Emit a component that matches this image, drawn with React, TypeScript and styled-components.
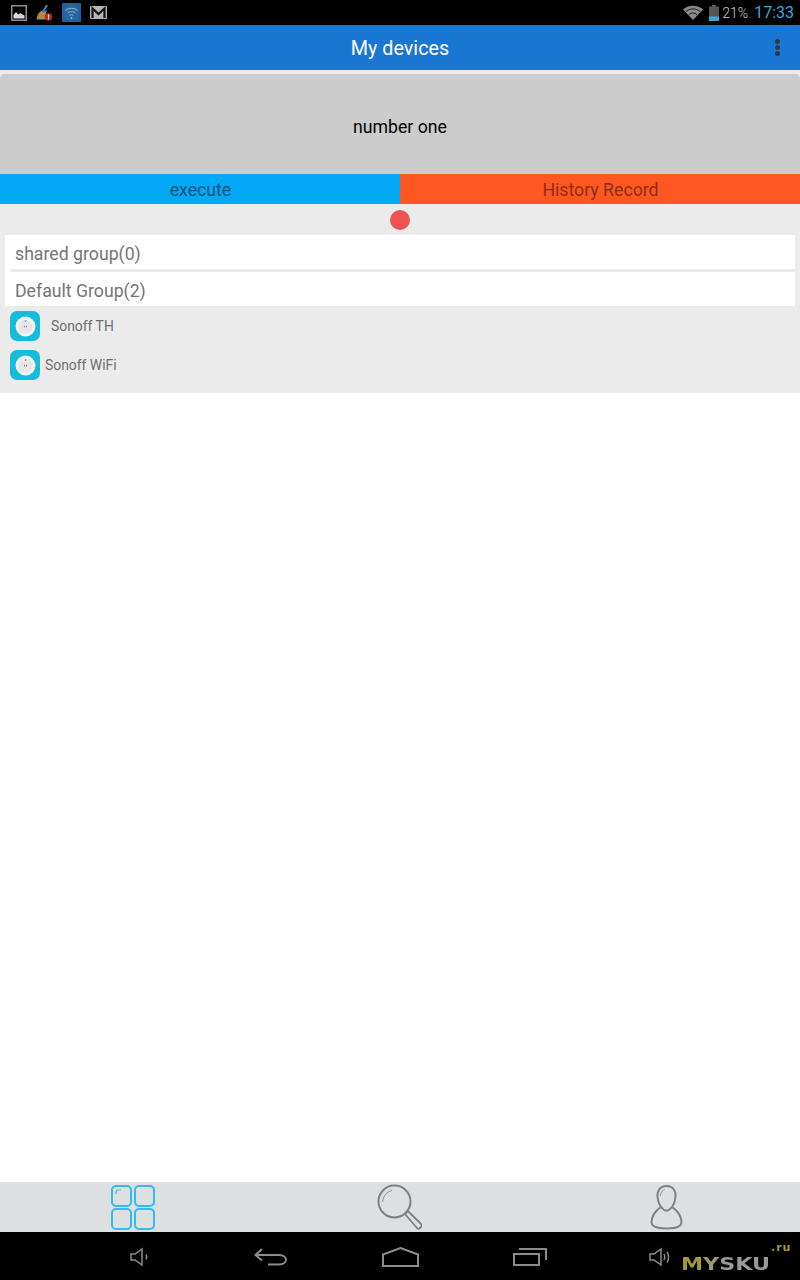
import React from "react";
import styled, { createGlobalStyle } from "styled-components";

const GlobalStyle = createGlobalStyle`
  html, body {
    margin: 0;
    padding: 0;
    background: #fff;
  }
  * {
    box-sizing: border-box;
  }
`;

const Screen = styled.div`
  width: 800px;
  height: 1280px;
  display: flex;
  flex-direction: column;
  overflow: hidden;
  background: #fff;
  font-family: Roboto, "Liberation Sans", sans-serif;
`;

const StatusBar = styled.div`
  height: 25px;
  flex: none;
  display: flex;
  align-items: center;
  justify-content: space-between;
  padding: 0 6px 0 11px;
  background: #000;
`;

const StatusGroup = styled.div<{ $gap: number }>`
  display: flex;
  align-items: center;
  gap: ${(p) => p.$gap}px;
`;

const WifiSlot = styled.span`
  display: flex;
  margin-right: 6px;
`;

const BatteryText = styled.span`
  margin-left: 3px;
  color: #c8c8c8;
  font-size: 14px;
  font-weight: 300;
`;

const Clock = styled.span`
  margin-left: 6px;
  color: #33a9dd;
  font-size: 16px;
`;

const AppBar = styled.header`
  height: 45px;
  flex: none;
  position: relative;
  display: flex;
  align-items: center;
  justify-content: center;
  padding-top: 1px;
  background: #1976d2;
  color: #fff;
  font-size: 19.8px;
`;

const MenuDots = styled.div`
  position: absolute;
  right: 20px;
  top: 14px;
  display: flex;
  flex-direction: column;
  gap: 1px;
`;

const MenuDot = styled.span`
  width: 5px;
  height: 5px;
  border-radius: 50%;
  background: #2f3a46;
`;

const Content = styled.main`
  flex: 1;
  display: flex;
  flex-direction: column;
  background: #fff;
`;

const DeviceCard = styled.section`
  padding: 4px 0 1px;
  background: #ebebeb;
`;

const CardTitle = styled.div`
  height: 100px;
  display: flex;
  align-items: center;
  justify-content: center;
  padding-top: 6px;
  border-radius: 5px 5px 0 0;
  background: #cccccc;
  color: #000;
  font-size: 17.7px;
`;

const ActionRow = styled.div`
  display: grid;
  grid-template-columns: 1fr 1fr;
  height: 30px;
`;

const ActionButton = styled.div<{ $bg: string; $fg: string }>`
  display: flex;
  align-items: center;
  justify-content: center;
  padding: 2px 0 0 1px;
  background: ${(p) => p.$bg};
  color: ${(p) => p.$fg};
  font-size: 17.7px;
`;

const DotRow = styled.div`
  height: 31px;
  display: flex;
  align-items: center;
  justify-content: center;
`;

const RedDot = styled.span`
  width: 20px;
  height: 20px;
  border-radius: 50%;
  background: #ef5350;
`;

const GroupList = styled.div`
  margin: 0 5px;
  background: #fff;
`;

const GroupRow = styled.div<{ $divider?: boolean }>`
  height: ${(p) => (p.$divider ? 37 : 34)}px;
  display: flex;
  align-items: center;
  position: relative;
  padding: 3px 0 ${(p) => (p.$divider ? 3 : 0)}px 10px;
  color: #757575;
  font-size: 17.7px;

  &::after {
    content: "";
    display: ${(p) => (p.$divider ? "block" : "none")};
    position: absolute;
    left: 5px;
    right: 0;
    bottom: 0;
    height: 3px;
    background: #ebebeb;
  }
`;

const DeviceList = styled.div`
  display: flex;
  flex-direction: column;
  gap: 9px;
  padding: 5px 10px 12px;
`;

const DeviceRow = styled.div`
  display: flex;
  align-items: center;
  height: 30px;
`;

const DeviceName = styled.span<{ $indent: number }>`
  margin-left: ${(p) => p.$indent}px;
  color: #6f6f6f;
  font-size: 13.9px;
`;

const DeviceIconTile = styled.div`
  width: 30px;
  height: 30px;
  display: flex;
  align-items: center;
  justify-content: center;
  border-radius: 7px;
  background: #16bcdc;
`;

const Spacer = styled.div`
  flex: 1;
`;

const TabBar = styled.nav`
  height: 50px;
  flex: none;
  display: grid;
  grid-template-columns: repeat(3, 1fr);
  background: #dde0e1;
`;

const Tab = styled.div`
  display: flex;
  align-items: center;
  justify-content: center;
`;

const NavBar = styled.div`
  height: 48px;
  flex: none;
  position: relative;
  display: grid;
  grid-template-columns: repeat(5, 130px);
  justify-content: center;
  align-items: center;
  padding-top: 2px;
  background: #000;
`;

const NavKey = styled.div`
  display: flex;
  justify-content: center;
`;

const Watermark = styled.div`
  position: absolute;
  left: 681px;
  top: 20px;
  font-family: "DejaVu Sans", sans-serif;
  font-weight: 700;
  font-size: 17.5px;
  line-height: 24px;
  transform: scaleX(1.27);
  transform-origin: left center;
  background: linear-gradient(90deg, #a29a38 0, #a29a38 24%, #9a9a9a 45%, #9a9a9a 100%);
  -webkit-background-clip: text;
  background-clip: text;
  color: transparent;
`;

const WatermarkTld = styled.span`
  position: absolute;
  left: 771px;
  top: 9px;
  color: #a29a38;
  font-family: "DejaVu Sans", sans-serif;
  font-weight: 700;
  font-size: 11px;
  letter-spacing: 1px;
`;

const PictureIcon = () => (
  <svg width="16" height="16" viewBox="0 0 16 16">
    <rect x="0.75" y="0.75" width="14.5" height="14.5" fill="#000" stroke="#8f8f8f" strokeWidth="1.5" />
    <path d="M2.5 13.500V10l2.500-3 2.500 2.500L9.500 8l2 1.500 2 1v3z" fill="#d8d8d8" />
  </svg>
);

const BroomIcon = () => (
  <svg width="17" height="17" viewBox="0 0 17 17">
    <path d="M0.500 15.500c.5-4 2-7 4.500-8.500h4.500l1.500 5v3.500z" fill="#a88c4e" />
    <path d="M7.500 7l3.500-6" stroke="#2f86c0" strokeWidth="2" fill="none" />
    <path d="M6 7h5" stroke="#2f6f9c" strokeWidth="1.500" fill="none" />
    <circle cx="12.500" cy="13" r="3.700" fill="#c81e1e" />
    <rect x="11.900" y="10.500" width="1.200" height="3.200" fill="#fff" />
    <rect x="11.900" y="14.300" width="1.200" height="1.100" fill="#fff" />
  </svg>
);

const WifiTileIcon = () => (
  <svg width="19" height="19" viewBox="0 0 19 19">
    <rect width="19" height="19" fill="#235fa0" />
    <circle cx="9.500" cy="9.500" r="8" fill="#2a659f" />
    <path d="M3.500 7.500c3.500-3 8.500-3 12 0M5.500 10c2.500-2 5.500-2 8 0M7.500 12.500c1.200-1 2.800-1 4 0" stroke="#9fb8d2" strokeWidth="1" fill="none" />
    <circle cx="9.500" cy="15" r="0.900" fill="#9fb8d2" />
  </svg>
);

const GmailIcon = () => (
  <svg width="17" height="13" viewBox="0 0 17 13">
    <rect width="17" height="13" fill="#b4b4b4" />
    <path d="M2.500 12V2.500L8.500 8l6-5.500V12" stroke="#111" strokeWidth="2.200" fill="none" />
  </svg>
);

const WifiIcon = () => (
  <svg width="20" height="15" viewBox="0 0 20 15">
    <path d="M0 4.500C5.500-.5 14.500-.5 20 4.500L10 15z" fill="#8a8a8a" />
    <path d="M3 6.500C7 3 13 3 17 6.500" stroke="#000" strokeWidth="0.800" fill="none" />
    <path d="M6 9.500c2.500-2 5.500-2 8 0" stroke="#000" strokeWidth="0.800" fill="none" />
  </svg>
);

const BatteryIcon = () => (
  <svg width="10" height="16" viewBox="0 0 10 16">
    <rect x="3" y="0" width="4" height="2" fill="#555" />
    <rect x="0" y="1.500" width="10" height="14.500" fill="#555" />
    <rect x="0" y="11.500" width="10" height="4.500" fill="#33a9dd" />
  </svg>
);

const PlugIcon = () => (
  <svg width="21" height="21" viewBox="0 0 21 21">
    <circle cx="10.500" cy="10.500" r="10" fill="#f4f5f6" />
    <circle cx="10.500" cy="11" r="7" fill="#e4e6e7" />
    <circle cx="10.500" cy="5" r="0.800" fill="#2a8fb5" />
    <rect x="9.200" y="9.800" width="0.800" height="1.500" fill="#667" />
    <rect x="11" y="9.800" width="0.800" height="1.500" fill="#667" />
  </svg>
);

const GridIcon = () => (
  <svg width="44" height="45" viewBox="0 0 44 45" fill="none" stroke="#33bbf2" strokeWidth="2">
    <rect x="1" y="1" width="19" height="20" rx="4" />
    <rect x="24" y="1" width="19" height="20" rx="4" />
    <rect x="1" y="24" width="19" height="20" rx="4" />
    <rect x="24" y="24" width="19" height="20" rx="4" />
    <path d="M5 9V7.500C5 6 6 5 7.500 5H10" strokeWidth="1.200" />
  </svg>
);

const SearchIcon = () => (
  <svg width="45" height="46" viewBox="0 0 45 46" fill="none" stroke="#808080">
    <circle cx="17.500" cy="17.500" r="16" strokeWidth="2" />
    <path d="M5.500 18C6 12 10 7.500 15 6.500" strokeWidth="0.800" />
    <path d="M28 30l3-3 13 13c1 1 1 2 0 3l-1 1c-1 1-2 1-3 0z" strokeWidth="1.800" />
  </svg>
);

const PersonIcon = () => (
  <svg width="33" height="45" viewBox="0 0 33 45" fill="none" stroke="#808080" strokeWidth="2">
    <path d="M16.500 1C10 1 7 6 7.500 12c.5 5 3 10 6 12.500 2 1.500 4 1.500 6 0 3-2.500 5.500-7.500 6-12.500C26 6 23 1 16.500 1z" />
    <path d="M11 22c-5 3-9.500 9-9.500 15 0 1.500.5 2.500 1.500 3.500 3 2.500 8 3 13.500 3s10.500-.5 13.500-3c1-1 1.500-2 1.500-3.500 0-6-4.500-12-9.500-15" />
    <path d="M10.500 11c0-3 1.500-5.500 4-6.500" strokeWidth="0.800" />
  </svg>
);

const VolumeDownIcon = () => (
  <svg width="20" height="20" viewBox="0 0 20 20" fill="none" stroke="#8c8c8c" strokeWidth="1.500">
    <path d="M1 7v6h4l7 5V2L5 7z" />
    <path d="M16 7.500c1 1.700 1 3.300 0 5" />
  </svg>
);

const BackIcon = () => (
  <svg width="33" height="18" viewBox="0 0 33 18" fill="none" stroke="#8c8c8c" strokeWidth="2">
    <path d="M8 1L1.500 7 8 12.500" />
    <path d="M2 7h22.500c4.500 0 7.500 2 7.500 4.700s-3 4.800-7.500 4.800H14" />
  </svg>
);

const HomeIcon = () => (
  <svg width="37" height="20" viewBox="0 0 37 20" fill="none" stroke="#8c8c8c" strokeWidth="2">
    <path d="M1 7.500L18.500 1 36 7.500V19H1z" />
  </svg>
);

const RecentsIcon = () => (
  <svg width="35" height="18" viewBox="0 0 35 18" fill="none" stroke="#8c8c8c" strokeWidth="2">
    <rect x="1" y="6" width="25" height="11" />
    <path d="M6 1h27v11" />
  </svg>
);

const VolumeUpIcon = () => (
  <svg width="22" height="20" viewBox="0 0 22 20" fill="none" stroke="#8c8c8c" strokeWidth="1.500">
    <path d="M1 7v6h4l7 5V2L5 7z" />
    <path d="M15 7c1 2 1 4 0 6M18 4.500c2 3.500 2 7.500 0 11" />
  </svg>
);

const devices = [
  { name: "Sonoff TH", indent: 11 },
  { name: "Sonoff WiFi", indent: 5 }
];

export default function App() {
  return (
    <Screen>
      <GlobalStyle />
      <StatusBar>
        <StatusGroup $gap={9}>
          <PictureIcon />
          <BroomIcon />
          <WifiTileIcon />
          <GmailIcon />
        </StatusGroup>
        <StatusGroup $gap={0}>
          <WifiSlot><WifiIcon /></WifiSlot>
          <BatteryIcon />
          <BatteryText>21%</BatteryText>
          <Clock>17:33</Clock>
        </StatusGroup>
      </StatusBar>
      <AppBar>
        My devices
        <MenuDots>
          <MenuDot />
          <MenuDot />
          <MenuDot />
        </MenuDots>
      </AppBar>
      <Content>
        <DeviceCard>
          <CardTitle>number one</CardTitle>
          <ActionRow>
            <ActionButton $bg="#03a9f4" $fg="#07527a">execute</ActionButton>
            <ActionButton $bg="#ff5722" $fg="#8c3013">History Record</ActionButton>
          </ActionRow>
          <DotRow>
            <RedDot />
          </DotRow>
          <GroupList>
            <GroupRow $divider>shared group(0)</GroupRow>
            <GroupRow>Default Group(2)</GroupRow>
          </GroupList>
          <DeviceList>
            {devices.map((d) => (
              <DeviceRow key={d.name}>
                <DeviceIconTile>
                  <PlugIcon />
                </DeviceIconTile>
                <DeviceName $indent={d.indent}>{d.name}</DeviceName>
              </DeviceRow>
            ))}
          </DeviceList>
        </DeviceCard>
        <Spacer />
      </Content>
      <TabBar>
        <Tab><GridIcon /></Tab>
        <Tab><SearchIcon /></Tab>
        <Tab><PersonIcon /></Tab>
      </TabBar>
      <NavBar>
        <NavKey><VolumeDownIcon /></NavKey>
        <NavKey><BackIcon /></NavKey>
        <NavKey><HomeIcon /></NavKey>
        <NavKey><RecentsIcon /></NavKey>
        <NavKey><VolumeUpIcon /></NavKey>
        <Watermark>MYSKU</Watermark>
        <WatermarkTld>.ru</WatermarkTld>
      </NavBar>
    </Screen>
  );
}
